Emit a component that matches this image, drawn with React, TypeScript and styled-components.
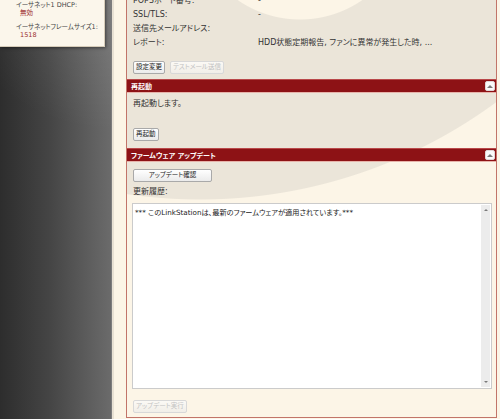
import styled, { createGlobalStyle } from "styled-components";

const GlobalStyle = createGlobalStyle`
  html, body {
    margin: 0;
    padding: 0;
    overflow: hidden;
    background: #fcf5e7;
  }
  body {
    font-family: "DejaVu Sans", "Noto Sans CJK JP", sans-serif;
    font-size: 8px;
    color: #333;
    font-feature-settings: "palt";
  }
`;

const settings = [
  { label: "POP3ポート番号:", value: "-" },
  { label: "SSL/TLS:", value: "-" },
  { label: "送信先メールアドレス:", value: "" },
  { label: "レポート:", value: "HDD状態定期報告, ファンに異常が発生した時, ..." },
];

const netInfo = [
  { label: "イーサネット1 DHCP:", value: "無効" },
  { label: "イーサネットフレームサイズ1:", value: "1518" },
];

export default function App() {
  return (
    <Page>
      <GlobalStyle />
      <Sidebar>
        <InfoCard>
          {netInfo.map((item) => (
            <InfoGroup key={item.label}>
              <InfoLabel>{item.label}</InfoLabel>
              <InfoValue>{item.value}</InfoValue>
            </InfoGroup>
          ))}
        </InfoCard>
      </Sidebar>
      <Gutter />
      <Panel>
        <SettingsBody>
          {settings.map((row) => (
            <SettingRow key={row.label}>
              <span>{row.label}</span>
              <span>{row.value}</span>
            </SettingRow>
          ))}
          <ButtonRow>
            <Button>設定変更</Button>
            <Button disabled>テストメール送信</Button>
          </ButtonRow>
        </SettingsBody>

        <SectionHeader>
          <span>再起動</span>
          <Collapse>
            <ArrowUp />
          </Collapse>
        </SectionHeader>
        <RestartBody>
          <TextRow>再起動します。</TextRow>
          <ButtonRow $top={17}>
            <Button>再起動</Button>
          </ButtonRow>
        </RestartBody>

        <SectionHeader>
          <span>ファームウェア アップデート</span>
          <Collapse>
            <ArrowUp />
          </Collapse>
        </SectionHeader>
        <FirmwareBody>
          <ButtonRow $top={0}>
            <Button $wide>アップデート確認</Button>
          </ButtonRow>
          <TextRow $top={3}>更新履歴:</TextRow>
          <LogBox>
            <LogText>
              *** このLinkStationは、最新のファームウェアが適用されています。***
            </LogText>
            <ScrollTrack>
              <ArrowUp $small />
              <ArrowDown />
            </ScrollTrack>
          </LogBox>
          <ButtonRow $top={11}>
            <Button disabled>アップデート実行</Button>
          </ButtonRow>
        </FirmwareBody>
      </Panel>
    </Page>
  );
}

const Page = styled.div`
  display: flex;
  align-items: flex-start;
  height: 419px;
  overflow: hidden;
`;

const Sidebar = styled.aside`
  width: 111px;
  height: 100%;
  flex-shrink: 0;
  border-right: 1px solid #7d7d7d;
  background: radial-gradient(
      ellipse 150px 130px at 100% 0%,
      rgba(255, 255, 255, 0.12),
      transparent
    ),
    linear-gradient(90deg, #2d2d2d 0%, #454545 45%, #6b6b6b 100%);
`;

const InfoCard = styled.div`
  width: 105px;
  box-sizing: border-box;
  margin-top: -4px;
  padding: 4px 0 7px 16px;
  background: #fbf6eb;
  border: 1px solid #d6ccb9;
  border-left: none;
  box-shadow: 1px 1px 3px rgba(0, 0, 0, 0.45);
  display: flex;
  flex-direction: column;
  gap: 6px;
`;

const InfoGroup = styled.div`
  display: flex;
  flex-direction: column;
  font-size: 6.5px;
  line-height: 8px;
  white-space: nowrap;
`;

const InfoLabel = styled.span`
  color: #444;
`;

const InfoValue = styled.span`
  color: #9a2b2b;
  padding-left: 4px;
`;

const Gutter = styled.div`
  width: 14px;
  height: 419px;
  flex-shrink: 0;
  box-sizing: border-box;
  border-left: 2px solid #e8e1d3;
  background: #fcf5e6;
`;

const Panel = styled.main`
  width: 369px;
  flex-shrink: 0;
  margin-top: -7px;
  border: 1px solid #c27469;
  background: radial-gradient(
      circle 110px at 173px -84px,
      #fcf5e7 109px,
      transparent 110px
    ),
    radial-gradient(circle 500px at 73px -294px, #ebe5d9 499px, transparent 500px),
    #fcf5e7;
`;

const SettingsBody = styled.section`
  padding: 0 6px 5px 6px;
`;

const SettingRow = styled.div`
  display: grid;
  grid-template-columns: 125px 1fr;
  height: 14px;
  line-height: 14px;
  white-space: nowrap;
`;

const TextRow = styled.div<{ $top?: number }>`
  height: 14px;
  line-height: 14px;
  margin-top: ${(p) => p.$top ?? 0}px;
`;

const ButtonRow = styled.div<{ $top?: number }>`
  display: flex;
  gap: 5px;
  margin-top: ${(p) => p.$top ?? 11}px;
`;

const Button = styled.button<{ $wide?: boolean }>`
  height: 13px;
  box-sizing: border-box;
  padding: 0 2px;
  min-width: ${(p) => (p.$wide ? "79px" : "0")};
  font-family: inherit;
  font-size: 6.5px;
  line-height: 11px;
  color: #222;
  border: 1px solid #a9a9a9;
  border-radius: 2px;
  background: linear-gradient(#ffffff, #ebebeb);
  font-feature-settings: "palt";

  &:disabled {
    color: #c2c2c2;
    border-color: #d8d8d8;
    background: linear-gradient(#fbf9f5, #f1eee8);
  }
`;

const SectionHeader = styled.header`
  height: 12px;
  display: flex;
  align-items: center;
  justify-content: space-between;
  padding: 0 1px 0 4px;
  background: #8d1215;
  border-top: 1px solid #b9484a;
  border-bottom: 1px solid #e7b3aa;
  color: #fff;
  font-weight: bold;
  font-size: 7px;
`;

const Collapse = styled.span`
  width: 10px;
  height: 10px;
  box-sizing: border-box;
  display: flex;
  align-items: center;
  justify-content: center;
  background: #fafafa;
  border: 1px solid #e0d6d6;
  border-radius: 2px;
`;

const ArrowUp = styled.span<{ $small?: boolean }>`
  width: 0;
  height: 0;
  border-left: ${(p) => (p.$small ? 2 : 3)}px solid transparent;
  border-right: ${(p) => (p.$small ? 2 : 3)}px solid transparent;
  border-bottom: ${(p) => (p.$small ? 2 : 3)}px solid #7a7a7a;
`;

const ArrowDown = styled.span`
  width: 0;
  height: 0;
  border-left: 2px solid transparent;
  border-right: 2px solid transparent;
  border-top: 2px solid #7a7a7a;
`;

const RestartBody = styled.section`
  padding: 4px 6px 7px 6px;
`;

const FirmwareBody = styled.section`
  padding: 7px 4px 4px 5px;

  ${Button}:first-child {
    margin-left: 1px;
  }
  ${TextRow} {
    padding-left: 1px;
  }
`;

const LogBox = styled.div`
  height: 186px;
  box-sizing: border-box;
  margin-top: 4px;
  display: flex;
  border: 1px solid #cbcbcb;
  background: #fff;
`;

const LogText = styled.div`
  flex: 1;
  padding: 4px 2px;
  font-size: 7.2px;
  line-height: 10px;
  color: #222;
`;

const ScrollTrack = styled.div`
  width: 9px;
  margin: 1px;
  background: #ececec;
  display: flex;
  flex-direction: column;
  align-items: center;
  justify-content: space-between;
  padding: 4px 0;
`;
